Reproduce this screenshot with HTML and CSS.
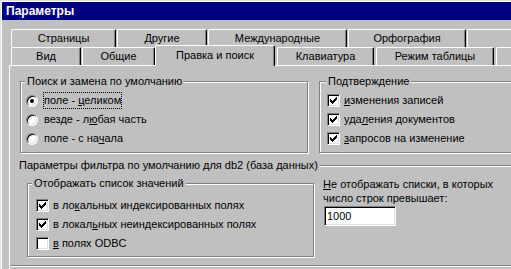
FILE: index.html
```html
<!DOCTYPE html>
<html lang="ru">
<head>
    <meta charset="UTF-8">
    <title>Параметры</title>
    <link rel="stylesheet" href="styles.css">
</head>
<body>
    <div class="window">
        <div class="titlebar">Параметры</div>
        <div class="dialog">
            <div class="tabrow">
                <div class="tab tab-pages">Страницы</div>
                <div class="tab tab-other">Другие</div>
                <div class="tab tab-intl">Международные</div>
                <div class="tab tab-spell">Орфография</div>
                <div class="tab tab-rest"></div>
            </div>
            <div class="tabrow">
                <div class="tab tab-view">Вид</div>
                <div class="tab tab-general">Общие</div>
                <div class="tab tab-edit active">Правка и поиск</div>
                <div class="tab tab-keys">Клавиатура</div>
                <div class="tab tab-sheet">Режим таблицы</div>
                <div class="tab tab-rest"></div>
            </div>
            <div class="panel">
                <div class="row-top">
                    <div class="group group-search">
                        <div class="group-title">Поиск и замена по умолчанию</div>
                        <div class="options">
                            <div class="option">
                                <span class="radio checked"></span>
                                <span class="text focus">поле - <u>ц</u>еликом</span>
                            </div>
                            <div class="option">
                                <span class="radio"></span>
                                <span class="text">везде - л<u>ю</u>бая часть</span>
                            </div>
                            <div class="option">
                                <span class="radio"></span>
                                <span class="text">поле - с на<u>ч</u>ала</span>
                            </div>
                        </div>
                    </div>
                    <div class="group group-confirm">
                        <div class="group-title">Подтверждение</div>
                        <div class="options">
                            <div class="option">
                                <span class="check"><svg width="11" height="11" viewBox="0 0 11 11" shape-rendering="crispEdges"><path d="M2 4h1v3h-1zM3 5h1v3h-1zM4 6h1v3h-1zM5 5h1v3h-1zM6 4h1v3h-1zM7 3h1v3h-1zM8 2h1v3h-1z" fill="#000"/></svg></span>
                                <span class="text"><u>и</u>зменения записей</span>
                            </div>
                            <div class="option">
                                <span class="check"><svg width="11" height="11" viewBox="0 0 11 11" shape-rendering="crispEdges"><path d="M2 4h1v3h-1zM3 5h1v3h-1zM4 6h1v3h-1zM5 5h1v3h-1zM6 4h1v3h-1zM7 3h1v3h-1zM8 2h1v3h-1z" fill="#000"/></svg></span>
                                <span class="text">уда<u>л</u>ения документов</span>
                            </div>
                            <div class="option">
                                <span class="check"><svg width="11" height="11" viewBox="0 0 11 11" shape-rendering="crispEdges"><path d="M2 4h1v3h-1zM3 5h1v3h-1zM4 6h1v3h-1zM5 5h1v3h-1zM6 4h1v3h-1zM7 3h1v3h-1zM8 2h1v3h-1z" fill="#000"/></svg></span>
                                <span class="text"><u>з</u>апросов на изменение</span>
                            </div>
                        </div>
                    </div>
                </div>

                <div class="group group-filter">
                    <div class="group-title">Параметры фильтра по умолчанию для db2 (база данных)</div>
                    <div class="filter-body">
                        <div class="group group-list">
                            <div class="group-title">Отображать список значений</div>
                            <div class="options">
                                <div class="option">
                                    <span class="check"><svg width="11" height="11" viewBox="0 0 11 11" shape-rendering="crispEdges"><path d="M2 4h1v3h-1zM3 5h1v3h-1zM4 6h1v3h-1zM5 5h1v3h-1zM6 4h1v3h-1zM7 3h1v3h-1zM8 2h1v3h-1z" fill="#000"/></svg></span>
                                    <span class="text">в ло<u>к</u>альных индексированных полях</span>
                                </div>
                                <div class="option">
                                    <span class="check"><svg width="11" height="11" viewBox="0 0 11 11" shape-rendering="crispEdges"><path d="M2 4h1v3h-1zM3 5h1v3h-1zM4 6h1v3h-1zM5 5h1v3h-1zM6 4h1v3h-1zM7 3h1v3h-1zM8 2h1v3h-1z" fill="#000"/></svg></span>
                                    <span class="text">в локал<u>ь</u>ных неиндексированных полях</span>
                                </div>
                                <div class="option">
                                    <span class="check"></span>
                                    <span class="text"><u>в</u> полях ODBC</span>
                                </div>
                            </div>
                        </div>
                        <div class="limit">
                            <div class="limit-label"><u>Н</u>е отображать списки, в которых<br>число строк превышает:</div>
                            <div class="textbox">1000</div>
                        </div>
                    </div>
                </div>
            </div>
        </div>
    </div>
</body>
</html>
```

FILE: styles.css
```css
body {
    margin: 0;
    background-color: #c0c0c0;
    font-family: "Liberation Sans", Arial, sans-serif;
    font-size: 11px;
    color: #000;
    overflow: hidden;
}

.window {
    box-sizing: border-box;
    width: 511px;
    height: 269px;
    overflow: hidden;
    border-top: 1px solid #dfdfdf;
    border-left: 1px solid #dfdfdf;
    padding: 1px 0 0 1px;
    box-shadow: inset 1px 1px #fff;
}

.titlebar {
    height: 18px;
    line-height: 18px;
    padding-left: 4px;
    background-color: #000080;
    color: #fff;
    font-size: 12px;
    font-weight: bold;
}

.dialog {
    padding: 9px 0 0 7px;
    width: 540px;
}

/* tabs */
.tabrow {
    display: flex;
    height: 18px;
    padding-left: 2px;
}

.tab {
    flex: none;
    box-sizing: border-box;
    height: 18px;
    margin-right: 1px;
    border-top: 1px solid #fff;
    border-left: 1px solid #fff;
    border-right: 1px solid #000;
    border-radius: 2px 2px 0 0;
    box-shadow: inset -1px 0 #808080;
    background-color: #c0c0c0;
    text-align: center;
    line-height: 16px;
    white-space: nowrap;
}

.tab-pages { width: 105px; }
.tab-other { width: 90px; }
.tab-intl { width: 139px; }
.tab-spell { width: 118px; }
.tab-rest { flex: 1; }

.tab-view { width: 70px; }
.tab-general { width: 73px; margin-right: 0; }
.tab-edit { width: 120px; margin-right: 2px; }
.tab-keys { width: 97px; margin-right: 2px; }
.tab-sheet { width: 118px; margin-right: 2px; }

.tab.active {
    position: relative;
    z-index: 1;
    height: 21px;
    margin-top: -2px;
    line-height: 18px;
}

.panel {
    border-top: 1px solid #fff;
    border-left: 1px solid #fff;
    padding-top: 15px;
    height: 200px;
}

/* group boxes */
.row-top {
    display: flex;
    gap: 11px;
    margin-left: 10px;
}

.group {
    box-sizing: border-box;
    border: 1px solid #808080;
    box-shadow: inset 1px 1px #fff, 1px 1px #fff;
}

.group-title {
    width: fit-content;
    margin: -7px 0 0 4px;
    padding: 0 2px;
    line-height: 13px;
    background-color: #c0c0c0;
    white-space: nowrap;
}

.group-search { width: 288px; }
.group-confirm { width: 200px; }
.group-confirm .group-title { margin-left: 6px; }

.options {
    padding: 3px 0 4px 5px;
}

.group-confirm .options { padding-left: 7px; }

.option {
    display: flex;
    align-items: center;
    height: 19px;
    white-space: nowrap;
}

.text {
    padding: 0 1px;
    line-height: 17px;
}

.focus {
    outline: 1px dotted #000;
    outline-offset: -1px;
}

.radio {
    box-sizing: border-box;
    display: flex;
    align-items: center;
    justify-content: center;
    width: 12px;
    height: 12px;
    margin-right: 5px;
    border: 1px solid;
    border-color: #808080 #fff #fff #808080;
    border-radius: 50%;
    box-shadow: inset 1px 1px #000, inset -1px -1px #dfdfdf;
    background-color: #fff;
}

.radio.checked::after {
    content: "";
    width: 4px;
    height: 4px;
    border-radius: 50%;
    background-color: #000;
}

.check {
    box-sizing: border-box;
    width: 13px;
    height: 13px;
    margin-right: 3px;
    border: 1px solid;
    border-color: #808080 #fff #fff #808080;
    box-shadow: inset 1px 1px #000, inset -1px -1px #dfdfdf;
    background-color: #fff;
}

.check svg {
    display: block;
}

/* filter defaults: no left edge, the line starts after the label */
.group-filter {
    width: 515px;
    margin-top: 12px;
    border-left: none;
    box-shadow: inset 0 1px #fff, 0 1px #fff;
}

.group-filter > .group-title {
    margin-left: 0;
    padding-left: 9px;
}

.filter-body {
    display: flex;
    align-items: flex-start;
    padding: 0 0 8px 17px;
}

.group-list {
    width: 287px;
    margin-top: 11px;
}

.group-list .options {
    padding: 6px 0 3px 8px;
}

.limit {
    margin: 5px 0 0 9px;
}

.limit-label {
    line-height: 14px;
    white-space: nowrap;
}

.textbox {
    box-sizing: border-box;
    width: 72px;
    height: 20px;
    margin: 1px 0 0 1px;
    padding-left: 2px;
    border: 1px solid;
    border-color: #808080 #fff #fff #808080;
    box-shadow: inset 1px 1px #000, inset -1px -1px #dfdfdf;
    background-color: #fff;
    line-height: 18px;
}
```
